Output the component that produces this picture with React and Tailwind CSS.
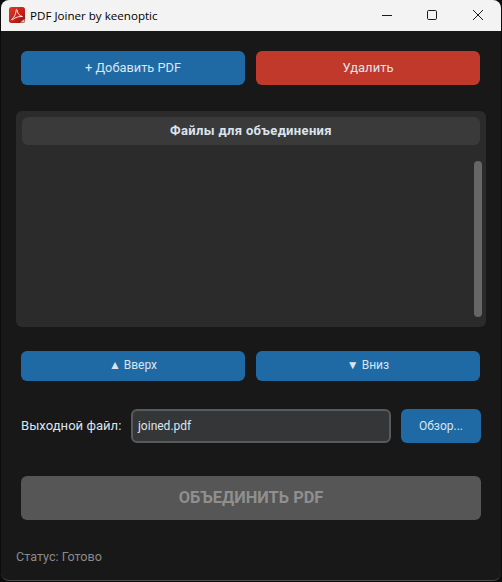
import React from "react";

const PdfIcon = () => (
  <svg width="16" height="16" viewBox="0 0 16 16" className="shrink-0">
    <defs>
      <linearGradient id="pdfRed" x1="0" y1="0" x2="1" y2="1">
        <stop offset="0" stopColor="#e0392a" />
        <stop offset="0.6" stopColor="#c41f16" />
        <stop offset="1" stopColor="#8f0f0c" />
      </linearGradient>
    </defs>
    <rect x="0" y="0" width="16" height="16" rx="2.5" fill="url(#pdfRed)" />
    <path
      d="M2.5 12.5C5 11 7 7 7.2 3.2c0-1 .9-1 1 0 .2 3 2 5.6 5.3 6.3-3.4-.2-7 .7-9.4 2.8-.7.6-1.2.6-1.6.2z"
      fill="none"
      stroke="#f5e6e0"
      strokeWidth="1"
    />
    <path d="M11 15.5l4.5-3.5v2.5a1 1 0 0 1-1 1z" fill="#c9c9c9" />
  </svg>
);

function BlueButton({ children, className = "" }) {
  return (
    <button className={`bg-[#1f6aa5] text-[#dce4ee] rounded-md flex items-center justify-center ${className}`}>
      {children}
    </button>
  );
}

export default function App() {
  return (
    <div className="w-[502px] h-[582px] bg-[#0c0c0c] pl-px pr-px overflow-hidden" style={{ fontFamily: "Roboto, sans-serif" }}>
      <div className="h-[581px] bg-[#181818] rounded-t-lg rounded-b-lg border-b border-[#4a4a4a] overflow-hidden flex flex-col">
        {/* TITLE BAR */}
        <div className="h-[31px] bg-[#f3f3f3] flex items-center shrink-0 pl-[8px]">
          <div className="mb-[2px]"><PdfIcon /></div>
          <span className="ml-[5px] text-[11.6px] text-black" style={{ fontFamily: "'Open Sans', sans-serif" }}>
            PDF Joiner by keenoptic
          </span>
          <div className="ml-auto flex items-center text-[#1a1a1a] pr-[18px] gap-[35px] mb-[2px]">
            <svg width="10" height="10" viewBox="0 0 10 10"><path d="M0 5.5h10" stroke="currentColor" strokeWidth="1" /></svg>
            <svg width="10" height="10" viewBox="0 0 10 10"><rect x=".5" y=".5" width="9" height="9" rx="1.2" fill="none" stroke="currentColor" strokeWidth="1" /></svg>
            <svg width="10" height="10" viewBox="0 0 10 10" className="ml-px"><path d="M0 0l10 10M10 0L0 10" stroke="currentColor" strokeWidth="1" /></svg>
          </div>
        </div>

        <div className="flex-1 flex flex-col pl-[15px] pr-[15px]">
          {/* TOP BUTTONS */}
          <div className="flex gap-[11px] mt-[20px] pl-[5px] pr-[5px]">
            <BlueButton className="w-[224px] h-[34px] text-[12.8px]">+ Добавить PDF</BlueButton>
            <button className="w-[224px] h-[34px] bg-[#c0392b] text-[#dce4ee] rounded-md text-[13px]">Удалить</button>
          </div>

          {/* FILE LIST */}
          <div className="relative mt-[26px] h-[216px] w-[470px] bg-[#2b2b2b] rounded-md p-[6px]">
            <div className="h-[28px] bg-[#3a3a3a] rounded-md flex items-center justify-center text-[#dce4ee] text-[13px] font-bold tracking-[0.35px]">
              Файлы для объединения
            </div>
            <div className="absolute left-[458px] top-[50px] w-[8px] h-[156px] rounded bg-[#666666]"></div>
          </div>

          {/* MOVE BUTTONS */}
          <div className="flex gap-[11px] mt-[24px] pl-[5px] pr-[5px]">
            <BlueButton className="w-[224px] h-[30px] text-[12px] pb-[2px]">▲ Вверх</BlueButton>
            <BlueButton className="w-[224px] h-[30px] text-[12px] pb-[2px]">▼ Вниз</BlueButton>
          </div>

          {/* OUTPUT FILE */}
          <div className="flex items-center mt-[28px] pl-[5px]">
            <span className="w-[110px] text-[13.1px] text-[#dce4ee]">Выходной файл:</span>
            <div className="w-[260px] h-[34px] bg-[#343638] border-2 border-[#565b5e] rounded-md flex items-center px-[5px] text-[12px] text-[#dce4ee]">
              joined.pdf
            </div>
            <BlueButton className="ml-[10px] w-[80px] h-[34px] text-[12px]">Обзор...</BlueButton>
          </div>

          {/* MERGE */}
          <div className="mt-[33px] ml-[5px] w-[460px] h-[44px] bg-[#565656] rounded-md flex items-center justify-center text-[16.4px] font-bold text-[#8f8f8f]">
            ОБЪЕДИНИТЬ PDF
          </div>

          <div className="mt-[28px] text-[12.6px] text-[#8a8a8a]">Статус: Готово</div>
        </div>
      </div>
    </div>
  );
}
